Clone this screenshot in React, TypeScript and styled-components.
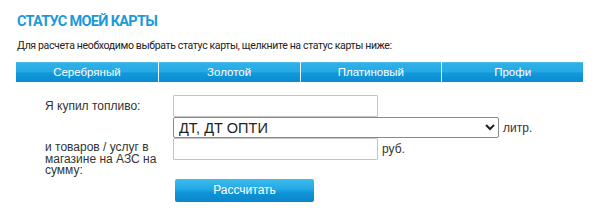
import React from "react";
import styled, { createGlobalStyle } from "styled-components";

const Global = createGlobalStyle`
  html, body { margin: 0; padding: 0; background: #fff; }
  body { font-family: "Liberation Sans", Arial, sans-serif; color: #333; }
`;

const Page = styled.div`
  padding: 13px 17px 0 16px;
  width: 567px;
`;

const Title = styled.h1`
  margin: 0 0 0 1px;
  font-family: Roboto, "Liberation Sans", sans-serif;
  font-weight: 700;
  font-size: 14.5px;
  line-height: 18px;
  color: #1b9ad8;
  letter-spacing: -0.7px;
`;

const Hint = styled.p`
  margin: 8px 0 0 1px;
  font-family: Roboto, "Liberation Sans", sans-serif;
  font-size: 10.5px;
  line-height: 13px;
  letter-spacing: -0.35px;
  color: #222;
`;

const Tabs = styled.div`
  margin-top: 10px;
  display: grid;
  grid-template-columns: repeat(4, 1fr);
  height: 20px;
`;

const Tab = styled.div<{ $first?: boolean }>`
  display: flex;
  align-items: center;
  justify-content: center;
  color: #fff;
  font-size: 11.5px;
  border-left: ${(p) => (p.$first ? "none" : "1px solid #e8f6fd")};
  background: linear-gradient(
    to bottom,
    #6ccaf0 0,
    #2eb0e8 1px,
    #27a9e5 48%,
    #1299db 55%,
    #0a8bd0 100%
  );
  cursor: pointer;
`;

const Form = styled.div`
  margin-top: 13px;
  margin-left: 29px;
  display: grid;
  grid-template-columns: 128px auto;
  align-items: start;
`;

const Label = styled.div<{ $pad?: number }>`
  font-size: 12px;
  line-height: 11.5px;
  color: #333;
  padding-top: ${(p) => p.$pad ?? 0}px;
  padding-right: 4px;
`;

const Field = styled.div`
  display: flex;
  align-items: center;
  gap: 4px;
`;

const TextInput = styled.input`
  box-sizing: border-box;
  width: 205px;
  height: 22px;
  border: 1px solid #c4c4c4;
  border-radius: 1px;
  padding: 0 3px;
  margin: 0;
  font-family: "Liberation Sans", Arial, sans-serif;
  font-size: 13px;
  outline: none;
`;

const Select = styled.select`
  box-sizing: border-box;
  width: 326px;
  height: 21px;
  margin: 0;
  padding: 0 0 0 1px;
  border: 1px solid #8a8a8a;
  border-radius: 2px;
  font-family: "Liberation Sans", Arial, sans-serif;
  font-size: 14.5px;
  color: #222;
  background: #fff;
`;

const Unit = styled.span`
  font-size: 12px;
  color: #333;
`;

const Button = styled.button`
  margin: 2px 0 0 2px;
  width: 139px;
  height: 23px;
  border: none;
  border-radius: 2px;
  color: #fff;
  font-family: "Liberation Sans", Arial, sans-serif;
  font-size: 12px;
  padding: 0;
  background: linear-gradient(to bottom, #3cbcee 0, #22a8e4 45%, #0f93d6 60%, #0a86cc 100%);
  cursor: pointer;
`;

const tabs = ["Серебряный", "Золотой", "Платиновый", "Профи"];

export default function App() {
  return (
    <>
      <Global />
      <Page>
        <Title>СТАТУС МОЕЙ КАРТЫ</Title>
        <Hint>Для расчета необходимо выбрать статус карты, щелкните на статус карты ниже:</Hint>
        <Tabs>
          {tabs.map((t, i) => (
            <Tab key={t} $first={i === 0}>
              {t}
            </Tab>
          ))}
        </Tabs>
        <Form>
          <Label $pad={6}>Я купил топливо:</Label>
          <Field>
            <TextInput type="text" />
          </Field>
          <div />
          <Field>
            <Select defaultValue="dt">
              <option value="dt">ДТ, ДТ ОПТИ</option>
              <option value="ai92">АИ-92</option>
              <option value="ai95">АИ-95</option>
            </Select>
            <Unit>литр.</Unit>
          </Field>
          <Label $pad={4}>
            и товаров / услуг в магазине на АЗС на сумму:
          </Label>
          <Field>
            <TextInput type="text" />
            <Unit>руб.</Unit>
          </Field>
          <div />
          <div>
            <Button type="button">Рассчитать</Button>
          </div>
        </Form>
      </Page>
    </>
  );
}
